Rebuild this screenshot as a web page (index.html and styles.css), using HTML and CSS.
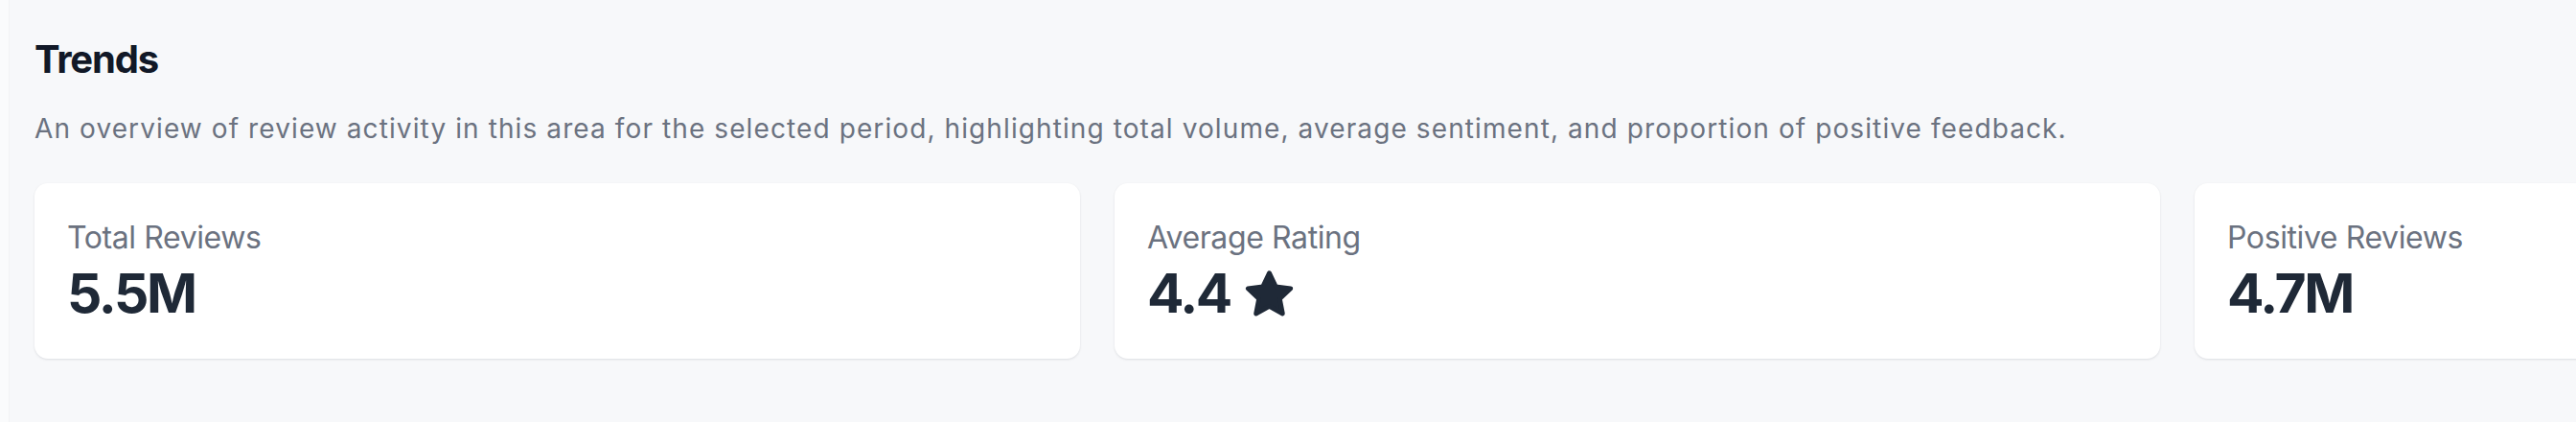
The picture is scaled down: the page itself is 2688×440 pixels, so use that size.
FILE: index.html
```html
<!DOCTYPE html>
<html lang="en">
<head>
<meta charset="utf-8">
<title>Trends</title>
<link rel="stylesheet" href="styles.css">
</head>
<body>
<div class="edge"></div>
<main class="page">
  <h2 class="title">Trends</h2>
  <p class="desc">An overview of review activity in this area for the selected period, highlighting total volume, average sentiment, and proportion of positive feedback.</p>
  <div class="cards">
    <section class="card">
      <div class="label">Total Reviews</div>
      <div class="value">5.5M</div>
    </section>
    <section class="card">
      <div class="label">Average Rating</div>
      <div class="value">4.4
        <svg class="star" viewBox="0 0 24 24" aria-hidden="true"><path d="M12 2.8l2.85 5.95 6.55.85-4.8 4.55 1.25 6.5L12 17.45l-5.85 3.2 1.25-6.5-4.8-4.55 6.55-.85z"/></svg>
      </div>
    </section>
    <section class="card">
      <div class="label">Positive Reviews</div>
      <div class="value">4.7M</div>
    </section>
  </div>
</main>
</body>
</html>
```
FILE: styles.css
```css
html, body {
  margin: 0;
  padding: 0;
  height: 100%;
  overflow: hidden;
}
body {
  background: #f7f8fa;
  font-family: Inter, "Noto Sans", sans-serif;
  display: flex;
}
.edge {
  flex: 0 0 9px;
  background: #fafbfc;
  border-right: 1px solid #f2f3f5;
}
.page {
  flex: 1;
  min-width: 0;
  padding: 34px 0 0 26px;
}
.title {
  margin: 0;
  font-size: 40px;
  line-height: 56px;
  font-weight: 700;
  color: #111827;
  letter-spacing: -1.2px;
}
.desc {
  margin: 24px 0 0;
  font-size: 28px;
  line-height: 40px;
  color: #6b7280;
  white-space: nowrap;
  letter-spacing: 1.1px;
}
.cards {
  display: flex;
  gap: 36px;
  margin-top: 37px;
}
.card {
  flex: 0 0 1091px;
  box-sizing: border-box;
  height: 183px;
  background: #ffffff;
  border-radius: 14px;
  box-shadow: 0 1px 3px rgba(17, 24, 39, 0.08), 0 1px 2px rgba(17, 24, 39, 0.04);
  padding: 33px 34px 36px;
}
.label {
  font-size: 32px;
  line-height: 48px;
  color: #6b7280;
  letter-spacing: -0.4px;
}
.value {
  margin-top: 2px;
  display: flex;
  align-items: center;
  gap: 12px;
  font-size: 57px;
  line-height: 64px;
  font-weight: 700;
  color: #1f2937;
  letter-spacing: -2.4px;
}
.star {
  width: 57px;
  height: 57px;
  fill: #1f2937;
  stroke: #1f2937;
  stroke-width: 2;
  stroke-linejoin: round;
}
```
